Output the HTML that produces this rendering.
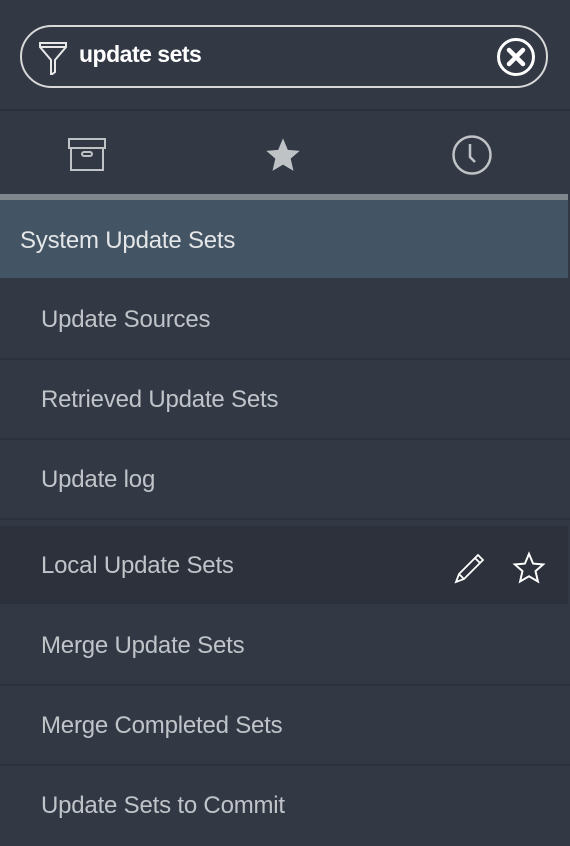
<!DOCTYPE html>
<html><head><style>
*{margin:0;padding:0;box-sizing:border-box}
body{width:570px;height:844px;background:#323945;font-family:"Liberation Sans",sans-serif;overflow:hidden;position:relative}
.search{position:absolute;left:20px;top:25px;width:528px;height:63px;border:2px solid #d8d8d8;border-radius:32px}
.search .t{position:absolute;left:57px;top:14px;font-size:23px;font-weight:bold;color:#fff;letter-spacing:-0.5px}
.div{position:absolute;left:0;width:570px;height:2px;background:#2b303a}
.bar{position:absolute;left:0;top:194px;width:568px;height:6px;background:#7f868c}
.hdr{position:absolute;left:0;top:200px;width:568px;height:78px;background:#435464;color:#e4e6e8;font-size:24px;padding:27px 0 0 20px;letter-spacing:-0.2px}
.row{position:absolute;left:0;width:570px;height:78px;color:#c0c4c9;font-size:24px;padding-left:41px;letter-spacing:-0.2px;line-height:80px}
.hl{background:#2c313b}
</style></head><body>
<div class="search">
<svg style="position:absolute;left:16px;top:14px" width="30" height="34" viewBox="0 0 30 34" fill="none" stroke="#e8e8e8" stroke-width="2"><path d="M2 2H28V6L17 19V31L13 34V19L2 6Z"/><path d="M2 6H28"/></svg>
<span class="t">update sets</span>
<svg style="position:absolute;left:474px;top:10px" width="40" height="40" viewBox="0 0 40 40" fill="none" stroke="#fff"><circle cx="20" cy="20" r="17.5" stroke-width="3"/><path d="M13 13L27 27M27 13L13 27" stroke-width="4.5" stroke-linecap="round"/></svg>
</div>
<div class="div" style="top:109px"></div>
<svg style="position:absolute;left:68px;top:137px" width="40" height="36" viewBox="0 0 40 36" fill="none" stroke="#c0c3c6" stroke-width="2"><rect x="1" y="2" width="36" height="9"/><rect x="3" y="11" width="32" height="22"/><rect x="14" y="15" width="10" height="4" rx="2"/></svg>
<svg style="position:absolute;left:262px;top:135px" width="42" height="40" viewBox="0 0 24 24"><path fill="#c0c3c6" d="M12 2l2.9 6.9 7.1.6-5.4 4.7 1.7 7.3L12 17.8 5.7 21.5l1.7-7.3L2 9.5l7.1-.6z"/></svg>
<svg style="position:absolute;left:451px;top:134px" width="42" height="42" viewBox="0 0 42 42" fill="none" stroke="#c0c3c6" stroke-width="2.5"><circle cx="21" cy="21" r="18.5"/><path d="M19 10V23L24 28"/></svg>
<div class="bar"></div>
<div class="hdr">System Update Sets</div>
<div class="row" style="top:280px">Update Sources</div>
<div class="div" style="top:358px"></div>
<div class="row" style="top:360px">Retrieved Update Sets</div>
<div class="div" style="top:438px"></div>
<div class="row" style="top:440px">Update log</div>
<div class="div" style="top:518px"></div>
<div class="row hl" style="top:526px;width:568px">Local Update Sets</div>
<svg style="position:absolute;left:454px;top:552px" width="32" height="32" viewBox="0 0 32 32" fill="none" stroke="#fff" stroke-width="1.8"><path d="M2 30L5 22L24 3L29 8L10 27Z M5 22L10 27 M21 6L26 11"/></svg>
<svg style="position:absolute;left:512px;top:551px" width="34" height="34" viewBox="0 0 24 24" fill="none" stroke="#fff" stroke-width="1.4"><path d="M12 2l2.9 6.9 7.1.6-5.4 4.7 1.7 7.3L12 17.8 5.7 21.5l1.7-7.3L2 9.5l7.1-.6z"/></svg>
<div class="row" style="top:606px">Merge Update Sets</div>
<div class="div" style="top:684px"></div>
<div class="row" style="top:686px">Merge Completed Sets</div>
<div class="div" style="top:764px"></div>
<div class="row" style="top:766px">Update Sets to Commit</div>
</body></html>
